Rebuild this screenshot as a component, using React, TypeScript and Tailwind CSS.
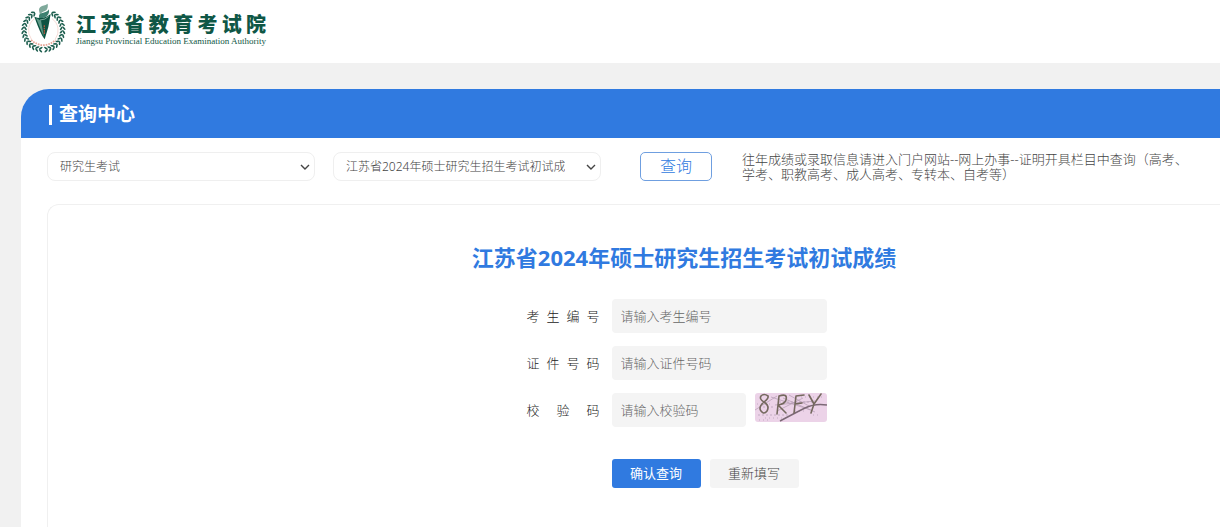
import { useState } from "react";

const fields = [
    { id: "examNo", label: "考生编号", placeholder: "请输入考生编号" },
    { id: "idNo", label: "证件号码", placeholder: "请输入证件号码" },
];

// leaves run up both sides of the wreath, leaving the top open for the torch
const leafAngles = [5, 16, 27, 38, 49, 60, 71, 82, 93, 104, 115, 126, 137, 147];

function Emblem() {
    return (
        <svg viewBox="0 0 138 150" className="w-[46px] h-[50px] shrink-0" aria-hidden="true">
            {[1, -1].map((side) => (
                <g key={side} transform={`translate(70 82) scale(${side} 1)`} fill="#1d5e4e">
                    {leafAngles.map((a) => (
                        <g key={a} transform={`rotate(${-a})`}>
                            <ellipse cx="3" cy="62" rx="6.5" ry="2.6" transform="rotate(-38 3 62)" />
                            <ellipse cx="3" cy="54" rx="6.5" ry="2.6" transform="rotate(38 3 54)" />
                        </g>
                    ))}
                </g>
            ))}
            <path d="M44 47A43 43 0 0 0 34 108" fill="none" stroke="#efb9ad" strokeWidth="1.5" />
            <path d="M96 47A43 43 0 0 1 106 108" fill="none" stroke="#efb9ad" strokeWidth="1.5" />
            <path
                d="M33 111Q70 142 107 111"
                fill="none"
                stroke="#df8572"
                strokeWidth="5"
                strokeDasharray="5 3"
                opacity="0.75"
            />
            <path d="M58 27Q54 14 66 9Q79 6 83 2Q86 18 75 24Q62 28 60 36Z" fill="#7fa99b" />
            <path d="M57 40Q56 31 70 29Q84 26 87 19Q89 36 76 42L58 48Z" fill="#3d8070" />
            <path d="M43 41Q68 52 92 33L85 72L74 109Q62 95 43 41Z" fill="#0d5342" />
            <path d="M48 45L72 103L63 53Z" fill="#5e9987" />
            <path d="M60 51Q76 51 86 40" fill="none" stroke="#b9d2c9" strokeWidth="2" />
            <path d="M73 67V94" stroke="#b0583f" strokeWidth="4" strokeDasharray="5 2" />
        </svg>
    );
}

function Captcha() {
    return (
        <svg viewBox="0 0 72 29" className="block w-[72px] h-[29px]" aria-hidden="true">
            <rect width="72" height="29" fill="#ecd3e8" />
            <g fill="none" stroke="#b39bb1" strokeWidth="0.7">
                <path d="M0 17L22 3M16 4L56 17M20 12L60 8M28 5L60 19M34 2L54 13M22 18L48 5" />
                <path
                    d="M2 11h15M10 25h24M4 27h12M40 18h12M46 4h22M58 22h8"
                    strokeDasharray="1 3"
                />
                <path d="M24 9h36M8 14h12M3 22h30" strokeDasharray="2 2" />
            </g>
            <path d="M25 28Q40 20 50 15T72 12" fill="none" stroke="#7b6875" strokeWidth="1.5" />
            <g fill="none" stroke="#75695f" strokeWidth="1.6" strokeLinecap="round" strokeLinejoin="round">
                <path d="M13 3Q9 0 6 3Q4 6 9 9Q15 13 12 18Q9 22 6 18Q3 14 9 9Q14 5 13 3" />
                <path d="M22 21L24 3Q33 0 31 7Q30 11 23 12L31 20" />
                <path d="M39 20L41 3L49 2M40 11L47 10" />
                <path d="M54 2L59 11L66 1M59 11L56 20" />
            </g>
        </svg>
    );
}

function Chevron() {
    return (
        <svg
            viewBox="0 0 10 6"
            className="pointer-events-none absolute right-[5px] top-[12px] w-[10px] h-[6px]"
            aria-hidden="true"
        >
            <path d="M1 1L5 5L9 1" fill="none" stroke="#444" strokeWidth="1.4" />
        </svg>
    );
}

function SelectBox({ label, option }: { label: string; option: string }) {
    return (
        <div className="relative w-[268px]">
            <select
                aria-label={label}
                className="block w-full h-[29px] appearance-none rounded-lg border border-[#efefef] bg-white pl-3 pr-[35px] text-xs font-light text-[#444]"
            >
                <option>{option}</option>
            </select>
            <Chevron />
        </div>
    );
}

export default function App() {
    const [values, setValues] = useState<Record<string, string>>({});

    const handleChange = (e: React.ChangeEvent<HTMLInputElement>) => {
        setValues({ ...values, [e.target.id]: e.target.value });
    };

    const labelStyle = "w-[73px] h-[34px] leading-[34px] [text-align-last:justify] text-[#222]";
    const inputStyle = "h-[34px] rounded-sm bg-[#f4f4f4] px-[9px] placeholder:text-[#666] outline-none";

    return (
        <div className="min-h-screen flex flex-col bg-[#f1f1f1] font-['Noto_Sans','Noto_Sans_CJK_SC',sans-serif]">
            <header className="h-[63px] bg-white pl-5 pt-[3px] flex items-start gap-[10px]">
                <Emblem />
                <div className="w-[190px] pt-[10px] text-[#0f5746]">
                    <div className="text-[20px] leading-[24px] font-black [text-align-last:justify]">
                        江苏省教育考试院
                    </div>
                    <div className="font-['Liberation_Serif',serif] text-[9px] leading-[9px] whitespace-nowrap [text-align-last:justify]">
                        Jiangsu Provincial Education Examination Authority
                    </div>
                </div>
            </header>

            <main className="flex-1 flex flex-col mt-[26px] ml-[21px] bg-white rounded-tl-[28px]">
                <div className="h-[49px] flex items-center gap-[7px] pl-[28px] pt-[2px] bg-[#307ae0] rounded-tl-[28px] text-white">
                    <span className="w-[3px] h-[20px] bg-white" />
                    <h1 className="text-[19px] font-bold">查询中心</h1>
                </div>

                <div className="flex items-start pl-[26px] pt-[14px]">
                    <div className="flex gap-[18px]">
                        <SelectBox label="考试类别" option="研究生考试" />
                        <SelectBox label="查询项目" option="江苏省2024年硕士研究生招生考试初试成绩" />
                    </div>
                    <button className="ml-[39px] w-[72px] h-[29px] shrink-0 rounded-[5px] border border-[#6f9fe0] text-base leading-[27px] font-light text-[#307ae0]">
                        查询
                    </button>
                    <p className="ml-[30px] max-w-[458px] text-[13px] leading-[15px] font-light text-[#444]">
                        往年成绩或录取信息请进入门户网站--网上办事--证明开具栏目中查询（高考、学考、职教高考、成人高考、专转本、自考等）
                    </p>
                </div>

                <section className="flex-1 mt-[22px] ml-[26px] pl-[100px] border-l border-t border-[#f0f0f0] rounded-tl-xl flex flex-col items-center">
                    <h2 className="mt-[36px] text-[22px] leading-[32px] font-bold text-[#307ae0]">
                        江苏省2024年硕士研究生招生考试初试成绩
                    </h2>
                    <form
                        className="mt-[26px] mr-[15px] grid grid-cols-[73px_215px] gap-x-3 gap-y-[13px] text-[13px] font-light"
                        onSubmit={(e) => e.preventDefault()}
                        onReset={() => setValues({})}
                    >
                        {fields.map((field) => (
                            <div key={field.id} className="contents">
                                <label htmlFor={field.id} className={labelStyle}>
                                    {field.label}
                                </label>
                                <input
                                    id={field.id}
                                    className={inputStyle}
                                    value={values[field.id] ?? ""}
                                    onChange={handleChange}
                                    placeholder={field.placeholder}
                                />
                            </div>
                        ))}
                        <label htmlFor="code" className={labelStyle}>
                            校验码
                        </label>
                        <div className="flex items-start justify-between">
                            <input
                                id="code"
                                className={`w-[134px] ${inputStyle}`}
                                value={values.code ?? ""}
                                onChange={handleChange}
                                placeholder="请输入校验码"
                            />
                            <button type="button" aria-label="8RFY" className="rounded-[3px] overflow-hidden">
                                <Captcha />
                            </button>
                        </div>
                        <div className="col-start-2 mt-[19px] flex gap-[9px]">
                            <button
                                type="submit"
                                className="w-[89px] h-[29px] rounded-[3px] bg-[#307ae0] font-normal text-white"
                            >
                                确认查询
                            </button>
                            <button type="reset" className="w-[89px] h-[29px] rounded-[3px] bg-[#f4f4f4] text-[#444]">
                                重新填写
                            </button>
                        </div>
                    </form>
                </section>
            </main>
        </div>
    );
}
